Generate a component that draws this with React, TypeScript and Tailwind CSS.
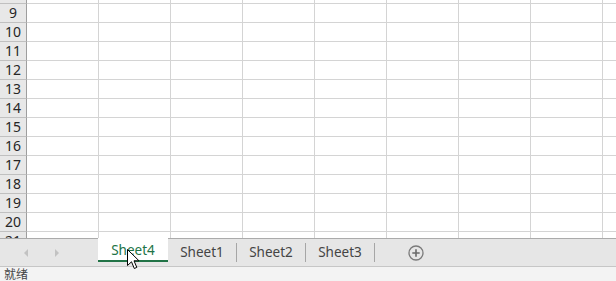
import React from "react";

const rows = [8, 9, 10, 11, 12, 13, 14, 15, 16, 17, 18, 19, 20, 21];
const cols = [0, 1, 2, 3, 4, 5, 6, 7, 8];
const sheets = ["Sheet1", "Sheet2", "Sheet3"];

function GridRow({ n }: { n: number }) {
  return (
    <div className="flex h-[19px] shrink-0">
      <div className="w-[27px] shrink-0 border-r border-b border-r-[#9e9e9e] border-b-[#c0c0c0] bg-[#e8e8e8] text-center text-[14px] leading-[18px] text-[#262626]">
        {n}
      </div>
      {cols.map((c) => (
        <div key={c} className="w-[72px] shrink-0 border-r border-b border-[#d4d4d4] bg-white" />
      ))}
    </div>
  );
}

function Cursor() {
  return (
    <svg className="absolute left-[127px] top-[249px]" width="13" height="21" viewBox="0 0 13 21">
      <path
        d="M0.5 0.5 L0.5 16.5 L4.5 12.8 L7.3 19.5 L9.8 18.4 L7 11.8 L12 11.8 Z"
        fill="#fff"
        stroke="#000"
        strokeWidth="1"
        strokeLinejoin="miter"
      />
    </svg>
  );
}

export default function App() {
  return (
    <div
      className="relative flex h-[281px] w-[616px] flex-col overflow-hidden bg-white"
      style={{ fontFamily: '"Noto Sans", "Noto Sans CJK SC", sans-serif' }}
    >
      <div className="h-[238px] shrink-0 overflow-hidden">
        <div className="-mt-[15px] flex flex-col">
          {rows.map((r) => (
            <GridRow key={r} n={r} />
          ))}
        </div>
      </div>

      <div className="flex h-[29px] shrink-0 items-start border-t border-b border-t-[#ababab] border-b-[#c6c6c6] bg-[#e6e6e6]">
        <div className="flex h-[27px] w-[98px] shrink-0 items-center">
          <svg className="ml-[24px]" width="5" height="8" viewBox="0 0 5 8">
            <path d="M4 0 L0 4 L4 8 Z" fill="#c2c2c2" />
          </svg>
          <svg className="ml-[26px]" width="5" height="8" viewBox="0 0 5 8">
            <path d="M0 0 L4 4 L0 8 Z" fill="#c2c2c2" />
          </svg>
        </div>
        <div className="-mt-px flex h-[24px] w-[70px] shrink-0 items-center justify-center border-b-2 border-[#217346] bg-white pt-[3px] text-[13.5px] leading-none text-[#217346]">
          Sheet4
        </div>
        {sheets.map((s) => (
          <div key={s} className="flex h-[27px] items-center">
            <div className="flex w-[68px] justify-center pt-[1px] text-[13.5px] leading-none text-[#444]">
              {s}
            </div>
            <div className="h-[19px] w-px bg-[#a6a6a6]" />
          </div>
        ))}
        <div className="ml-[33px] flex h-[27px] items-center">
          <svg width="16" height="16" viewBox="0 0 16 16">
            <circle cx="8" cy="8" r="7" fill="none" stroke="#7a7a7a" strokeWidth="1.3" />
            <path d="M8 4.3 V11.7 M4.3 8 H11.7" stroke="#6a6a6a" strokeWidth="1.6" />
          </svg>
        </div>
      </div>

      <div className="flex-1 bg-[#f3f3f3] pl-[4px] pt-[1px] text-[12px] leading-[13px] text-[#444]">
        就绪
      </div>

      <Cursor />
    </div>
  );
}
